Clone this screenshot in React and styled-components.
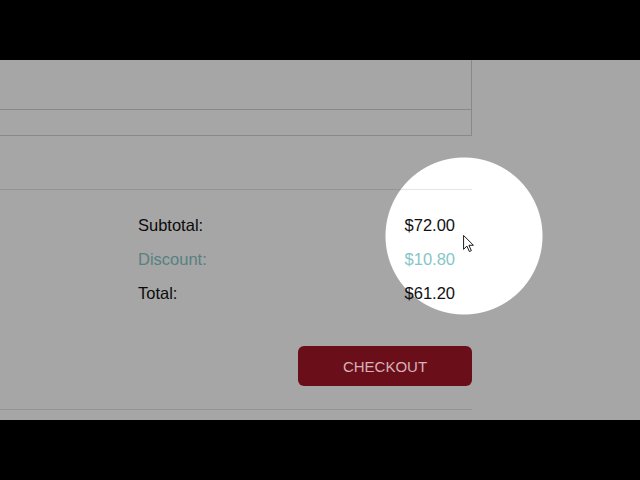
import React from "react";
import styled, { createGlobalStyle } from "styled-components";

const GlobalStyle = createGlobalStyle`
  html, body {
    margin: 0;
    padding: 0;
    background: #000;
    font-family: "Liberation Sans", Arial, sans-serif;
  }
`;

const Frame = styled.div`
  width: 640px;
  height: 480px;
  display: flex;
  flex-direction: column;
  background: #000;
  position: relative;
  overflow: hidden;
`;

const Bar = styled.div`
  height: 60px;
  flex: none;
  background: #000;
`;

const Stage = styled.div`
  height: 360px;
  flex: none;
  background: #fff;
  display: flex;
  flex-direction: column;
  width: 472px;
  box-shadow: 168px 0 0 #fff;
`;

const Table = styled.div`
  border-right: 1px solid #d2d2d2;
  display: flex;
  flex-direction: column;
`;

const TableRow = styled.div`
  height: ${(p) => p.h}px;
  border-bottom: 1px solid #d2d2d2;
`;

const Divider = styled.div`
  height: 1px;
  background: #e4e4e4;
  margin-top: ${(p) => p.top}px;
`;

const Totals = styled.div`
  padding: 18px 17px 0 138px;
  display: flex;
  flex-direction: column;
`;

const Line = styled.div`
  height: 34px;
  display: flex;
  align-items: center;
  justify-content: space-between;
  font-size: 16.5px;
  color: ${(p) => (p.accent ? "#86c6c6" : "#111")};
`;

const Actions = styled.div`
  display: flex;
  justify-content: flex-end;
  padding-top: 36px;
`;

const Checkout = styled.button`
  position: relative;
  z-index: 3;
  width: 174px;
  height: 40px;
  border: none;
  border-radius: 6px;
  background: #6a0f1a;
  color: #d6b2b8;
  font-family: "Liberation Sans", Arial, sans-serif;
  font-size: 15px;
  letter-spacing: 0;
  cursor: pointer;
`;

const Dim = styled.div`
  position: absolute;
  inset: 0;
  pointer-events: none;
  z-index: 2;
  background: radial-gradient(
    circle 79px at 464px 236px,
    transparent 78px,
    rgba(0, 0, 0, 0.35) 79px
  );
`;

const Pointer = styled.svg`
  position: absolute;
  left: 463px;
  top: 235px;
  z-index: 4;
`;

export default function App() {
  return (
    <Frame>
      <GlobalStyle />
      <Bar />
      <Stage>
        <Table>
          <TableRow h={49} />
          <TableRow h={25} />
        </Table>
        <Divider top={53} />
        <Totals>
          <Line>
            <span>Subtotal:</span>
            <span>$72.00</span>
          </Line>
          <Line accent>
            <span>Discount:</span>
            <span>$10.80</span>
          </Line>
          <Line>
            <span>Total:</span>
            <span>$61.20</span>
          </Line>
        </Totals>
        <Actions>
          <Checkout>CHECKOUT</Checkout>
        </Actions>
        <Divider top={23} />
      </Stage>
      <Bar />
      <Dim />
      <Pointer width="11" height="17" viewBox="0 0 12 19">
        <path
          d="M0.5 0.5 L0.5 16 L4.2 12.4 L7 18.5 L9.2 17.5 L6.5 11.5 L11.5 11.5 Z"
          fill="#fff"
          stroke="#000"
          strokeWidth="1"
          strokeLinejoin="round"
        />
      </Pointer>
    </Frame>
  );
}
